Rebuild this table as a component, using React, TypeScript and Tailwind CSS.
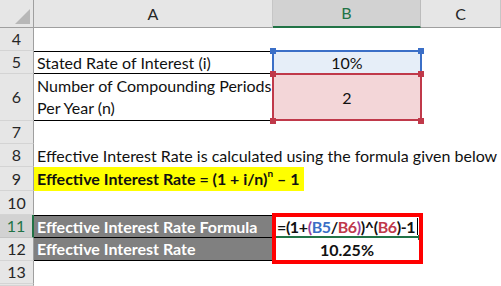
import React from 'react';

const hdr = 'bg-[#e6e6e6] border-r border-[#c6c6c6] border-b border-b-[#9f9f9f] flex items-center justify-center text-[#262626]';
const rowHdr = 'bg-[#e6e6e6] border-r border-r-[#9f9f9f] border-b border-b-[#d4d4d4] flex items-center justify-center text-[#262626]';

function RowHead({ n, active }: { n?: number; active?: boolean }) {
  if (active) {
    return (
      <div className="bg-[#d2d2d2] border-r-2 border-r-[#217346] border-b border-b-[#c4c4c4] flex items-center justify-center text-[#217346]">
        {n}
      </div>
    );
  }
  return <div className={rowHdr}>{n}</div>;
}

export default function App() {
  return (
    <div
      className="relative w-[501px] h-[286px] overflow-hidden bg-white text-[16px] text-[#111]"
      style={{ fontFamily: 'Lato, "Open Sans", sans-serif' }}
    >
      <div className="grid grid-cols-[34px_239px_148px_80px] grid-rows-[28px_23px_23px_47px_23px_23px_24px_24px_23px_23px_23px_1fr] h-full">
        {/* column headers */}
        <div className="bg-[#e6e6e6] border-r border-r-[#9f9f9f] border-b border-b-[#9f9f9f] relative">
          <div className="absolute right-[3px] bottom-[3px] w-0 h-0 border-l-[15px] border-l-transparent border-b-[15px] border-b-[#b7b7b7]" />
        </div>
        <div className={hdr}>A</div>
        <div className="bg-[#d2d2d2] border-r border-[#bcbcbc] border-b-2 border-b-[#217346] flex items-center justify-center text-[#217346]">B</div>
        <div className={hdr}>C</div>

        {/* row 4 */}
        <RowHead n={4} />
        <div className="col-span-3" />

        {/* row 5 */}
        <RowHead n={5} />
        <div className="border-t border-b border-black flex items-center pl-[3px]">Stated Rate of Interest (i)</div>
        <div className="bg-[#e6eef8] flex items-center justify-center">10%</div>
        <div />

        {/* row 6 */}
        <RowHead n={6} />
        <div className="border-b border-black flex flex-col justify-center pl-[3px] leading-[22px]">
          <span>Number of Compounding Periods</span>
          <span>Per Year (n)</span>
        </div>
        <div className="bg-[#f3d6d8] flex items-center justify-center">2</div>
        <div />

        {/* row 7 */}
        <RowHead n={7} />
        <div className="col-span-3" />

        {/* row 8 */}
        <RowHead n={8} />
        <div className="col-span-3 flex items-center pl-[3px] whitespace-nowrap">
          Effective Interest Rate is calculated using the formula given below
        </div>

        {/* row 9 */}
        <RowHead n={9} />
        <div className="col-span-3 flex">
          <span className="bg-[#ffff00] h-full flex items-center pl-[3px] pr-[5px] font-bold whitespace-nowrap">
            Effective Interest Rate = (1 + i/n)<sup className="text-[10px] -top-[6px]">n</sup>&nbsp;– 1
          </span>
        </div>

        {/* row 10 */}
        <RowHead n={10} />
        <div className="col-span-3" />

        {/* row 11 */}
        <RowHead n={11} active />
        <div className="bg-[#808080] border-t border-b border-black flex items-center pl-[3px] text-white font-bold whitespace-nowrap overflow-hidden">
          Effective Interest Rate Formula
        </div>
        <div className="flex items-center pl-[4px] font-bold whitespace-nowrap tracking-[-0.4px]">
          <span>=(1+</span>
          <span className="text-[#9b3f9a]">(</span>
          <span className="text-[#3a6fc6]">B5</span>
          <span>/</span>
          <span className="text-[#c0394a]">B6</span>
          <span className="text-[#9b3f9a]">)</span>
          <span>)^(</span>
          <span className="text-[#c0394a]">B6</span>
          <span>)-1</span>
          <span className="ml-[2px] w-px h-[17px] bg-black" />
        </div>
        <div />

        {/* row 12 */}
        <RowHead n={12} />
        <div className="bg-[#808080] border-b border-black flex items-center pl-[3px] text-white font-bold">
          Effective Interest Rate
        </div>
        <div className="flex items-center justify-center font-bold">10.25%</div>
        <div />

        {/* row 13 */}
        <RowHead n={13} />
        <div className="col-span-3" />

        {/* row 14, only its top edge shows */}
        <RowHead />
        <div className="col-span-3" />
      </div>

      {/* range highlight B5 (blue) */}
      <div className="absolute left-[272px] top-[50px] w-[150px] h-[25px] border-2 border-[#3b6fc7]" />
      <div className="absolute left-[270px] top-[48px] w-[6px] h-[6px] bg-[#3b6fc7]" />
      <div className="absolute left-[418px] top-[48px] w-[6px] h-[6px] bg-[#3b6fc7]" />

      {/* range highlight B6 (red) */}
      <div className="absolute left-[272px] top-[73px] w-[150px] h-[48px] border-2 border-[#c0394a]" />
      <div className="absolute left-[270px] top-[71px] w-[6px] h-[6px] bg-[#c0394a]" />
      <div className="absolute left-[418px] top-[71px] w-[6px] h-[6px] bg-[#c0394a]" />
      <div className="absolute left-[270px] top-[118px] w-[6px] h-[6px] bg-[#c0394a]" />
      <div className="absolute left-[418px] top-[118px] w-[6px] h-[6px] bg-[#c0394a]" />

      {/* active cell B11 */}
      <div className="absolute left-[275px] top-[236px] w-[144px] h-[2px] bg-[#217346]" />
      <div className="absolute left-[418px] top-[235px] w-[5px] h-[5px] bg-[#217346]" />

      {/* red callout box */}
      <div className="absolute left-[272px] top-[213px] w-[151px] h-[51px] border-4 border-[#ff0000]" />
    </div>
  );
}
